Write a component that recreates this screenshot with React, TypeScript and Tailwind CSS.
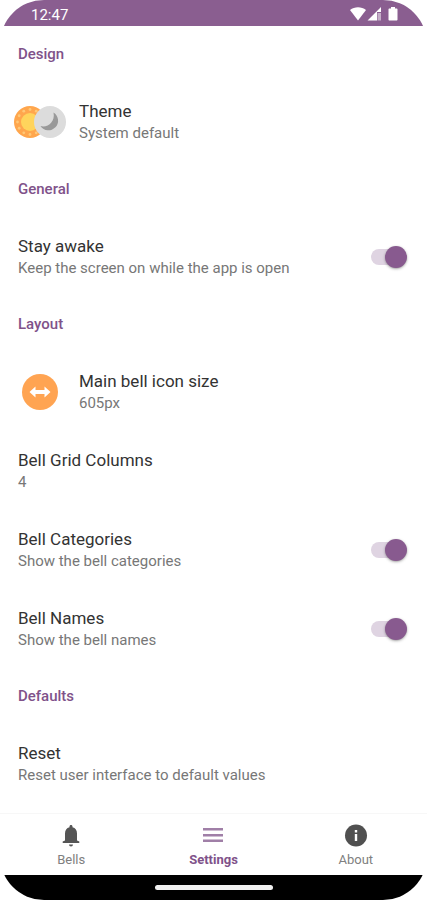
import React, { useState } from 'react';
import clsx from 'clsx';

interface SectionProps {
    title: string;
    children: React.ReactNode;
}

interface PreferenceProps {
    title: string;
    summary: string;
    icon?: React.ReactNode;
    onClick?: () => void;
}

interface SwitchPreferenceProps {
    id: string;
    title: string;
    summary: string;
    checked: boolean;
    onChange: (checked: boolean) => void;
}

const sunDots = Array.from({ length: 12 }, (_, i) => (i * Math.PI) / 6);

const ThemeIcon = () => (
    <svg width="54" height="34" viewBox="0 0 54 34" aria-hidden="true">
        <circle cx="17" cy="17" r="16" fill="#ffa64d" />
        {sunDots.map((angle) => (
            <circle
                key={angle}
                cx={17 + Math.cos(angle) * 12.5}
                cy={17 + Math.sin(angle) * 12.5}
                r="1.4"
                fill="#ffc876"
            />
        ))}
        <circle cx="17" cy="17" r="9" fill="#ffd45c" />
        <circle cx="37" cy="17" r="16" fill="#dcdcdc" />
        <path d="M40.500 7.500a9.600 9.600 0 1 1-13 13.500c7 2 15-4 13-13.500z" fill="#999999" />
    </svg>
);

const ResizeIcon = () => (
    <svg width="36" height="36" viewBox="0 0 36 36" aria-hidden="true">
        <circle cx="18" cy="18" r="18" fill="#ffa452" />
        <path d="M7.500 18l6-5.500v3.500h9v-3.500l6 5.500-6 5.500v-3.500h-9v3.500z" fill="#fff" />
    </svg>
);

const BellIcon = () => (
    <svg width="18" height="24" viewBox="0 0 18 24" fill="#555555" aria-hidden="true">
        <path d="M9 1c.9 0 1.500.7 1.500 1.500v.8c3 .7 4.500 3.200 4.500 6.300v6.900l2.300 1v1.500H.7v-1.500l2.300-1V9.600c0-3.100 1.500-5.600 4.500-6.300v-.8C7.500 1.700 8.100 1 9 1z" />
        <path d="M7 20.500h4a2 2 0 0 1-4 0z" />
    </svg>
);

const MenuIcon = () => (
    <svg width="20" height="24" viewBox="0 0 20 24" fill="#a07fa7" aria-hidden="true">
        <path d="M0 4h20v2.500H0zM0 10h20v2.500H0zM0 15.500h20V18H0z" />
    </svg>
);

const InfoIcon = () => (
    <svg width="24" height="24" viewBox="0 0 24 24" aria-hidden="true">
        <circle cx="12" cy="11.5" r="11" fill="#505050" />
        <path d="M10.800 10h2.400v7h-2.400zM10.800 6h2.400v2.400h-2.400z" fill="#fff" />
    </svg>
);

const StatusBar = () => (
    <div className="flex h-[26px] items-center justify-between bg-[#8a5e90] pl-[31px] pr-7 text-white">
        <span className="pt-1 text-[15px] leading-5">12:47</span>
        <svg width="50" height="16" viewBox="0 0 50 16" fill="#fff" className="mt-0.5" aria-hidden="true">
            <path d="M1 4C5.500.3 12.500.3 17 4L9 14.500z" />
            <path d="M32 1v5h-4v8.500H18.500z" />
            <path d="M28.500 7H32v7.500h-3.500z" fillOpacity=".5" />
            <path d="M42 1h4v1.500h1.500c.6 0 1 .4 1 1v10c0 .6-.4 1-1 1h-7c-.6 0-1-.4-1-1v-10c0-.6.4-1 1-1H42z" />
        </svg>
    </div>
);

const Section: React.FC<SectionProps> = ({ title, children }) => (
    <section>
        <h2 className="flex h-14 items-center px-[18px] text-[15px] font-medium text-[#80528a]">{title}</h2>
        {children}
    </section>
);

const PreferenceText = ({ title, summary }: { title: string; summary: string }) => (
    <span className="flex flex-col text-left">
        <span className="text-[17px] leading-[22px] text-[#333333]">{title}</span>
        <span className="text-[15px] leading-[22px] text-[#777777]">{summary}</span>
    </span>
);

const Preference: React.FC<PreferenceProps> = ({ title, summary, icon, onClick }) => (
    <button type="button" onClick={onClick} className="flex h-[79px] w-full items-center px-[18px]">
        {icon && <span className="-ml-[5px] mr-2 flex w-[58px] shrink-0">{icon}</span>}
        <PreferenceText title={title} summary={summary} />
    </button>
);

const SwitchPreference: React.FC<SwitchPreferenceProps> = ({ id, title, summary, checked, onChange }) => (
    <label htmlFor={id} className="flex h-[79px] items-center justify-between pl-[18px] pr-5">
        <PreferenceText title={title} summary={summary} />
        <span className="relative flex h-[22px] w-9 shrink-0 items-center">
            <input
                id={id}
                type="checkbox"
                role="switch"
                checked={checked}
                onChange={(e) => onChange(e.target.checked)}
                className="peer sr-only"
            />
            <span className="h-4 w-8 rounded-full bg-gray-300 peer-checked:bg-[#dfd4e2]" />
            <span className="absolute left-0 size-[22px] rounded-full bg-gray-100 shadow-sm shadow-black/30 peer-checked:left-auto peer-checked:right-0 peer-checked:bg-[#885a8f]" />
        </span>
    </label>
);

const tabs = [
    { name: 'Bells', icon: <BellIcon /> },
    { name: 'Settings', icon: <MenuIcon /> },
    { name: 'About', icon: <InfoIcon /> },
];

const App: React.FC = () => {
    const [activeTab, setActiveTab] = useState('Settings');
    const [stayAwake, setStayAwake] = useState(true);
    const [showCategories, setShowCategories] = useState(true);
    const [showNames, setShowNames] = useState(true);

    const handleReset = () => {
        setStayAwake(true);
        setShowCategories(true);
        setShowNames(true);
    };

    return (
        <div className="min-h-screen bg-white font-[Roboto,sans-serif]">
            <div className="flex min-h-screen flex-col overflow-hidden rounded-[44px] bg-white">
                <StatusBar />

                <main className="flex-1">
                    <Section title="Design">
                        <Preference title="Theme" summary="System default" icon={<ThemeIcon />} />
                    </Section>
                    <Section title="General">
                        <SwitchPreference
                            id="stay-awake"
                            title="Stay awake"
                            summary="Keep the screen on while the app is open"
                            checked={stayAwake}
                            onChange={setStayAwake}
                        />
                    </Section>
                    <Section title="Layout">
                        <Preference
                            title="Main bell icon size"
                            summary="605px"
                            icon={<span className="pl-[9px]"><ResizeIcon /></span>}
                        />
                        <Preference title="Bell Grid Columns" summary="4" />
                        <SwitchPreference
                            id="bell-categories"
                            title="Bell Categories"
                            summary="Show the bell categories"
                            checked={showCategories}
                            onChange={setShowCategories}
                        />
                        <SwitchPreference
                            id="bell-names"
                            title="Bell Names"
                            summary="Show the bell names"
                            checked={showNames}
                            onChange={setShowNames}
                        />
                    </Section>
                    <Section title="Defaults">
                        <Preference
                            title="Reset"
                            summary="Reset user interface to default values"
                            onClick={handleReset}
                        />
                    </Section>
                </main>

                <nav className="grid h-[62px] grid-cols-3 border-t border-[#f7f7f7]">
                    {tabs.map((tab) => (
                        <button
                            key={tab.name}
                            type="button"
                            onClick={() => setActiveTab(tab.name)}
                            className={clsx(
                                'flex flex-col items-center gap-1 pt-2.5 text-[13px] leading-4',
                                activeTab === tab.name ? 'font-bold text-[#80528a]' : 'text-[#808080]',
                            )}
                        >
                            {tab.icon}
                            {tab.name}
                        </button>
                    ))}
                </nav>

                <div className="flex h-[25px] justify-center bg-black pt-2.5">
                    <div className="h-[5px] w-[118px] rounded-full bg-[#f0f0f0]" />
                </div>
            </div>
        </div>
    );
};

export default App;
